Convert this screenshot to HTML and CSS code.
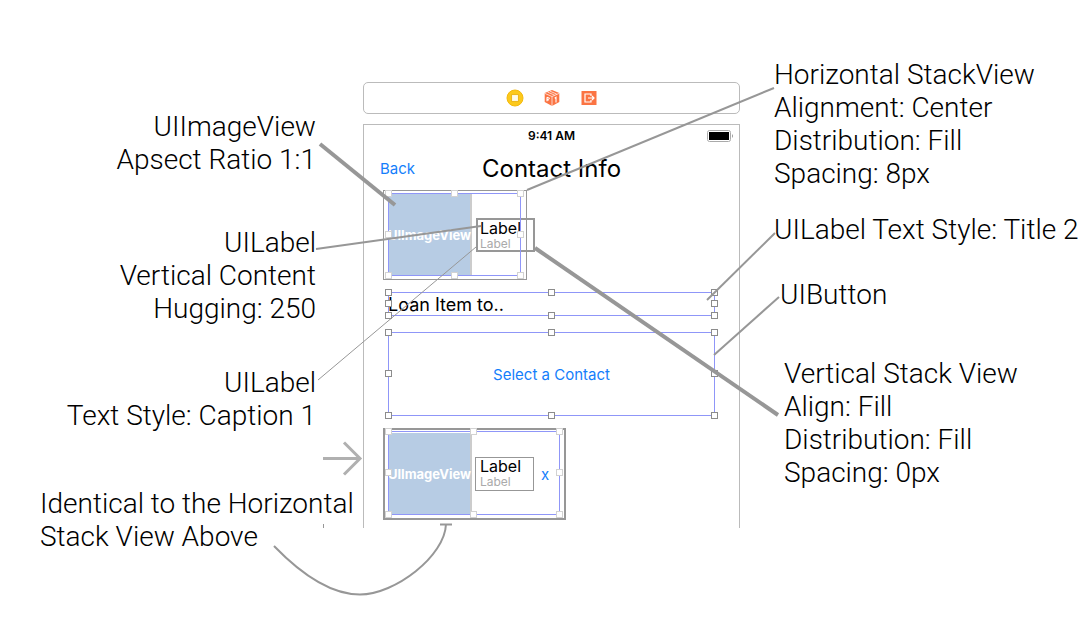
FILE: index.html
```html
<!DOCTYPE html>
<html lang="en">
<head>
<meta charset="utf-8">
<title>Contact Info layout</title>
<link rel="stylesheet" href="styles.css">
</head>
<body>
<main class="diagram">
  <section class="notes notes-left">
    <p class="note">UIImageView<br>Apsect Ratio 1:1</p>
    <p class="note note-hugging">UILabel<br>Vertical Content<br>Hugging: 250</p>
    <p class="note note-caption">UILabel<br>Text Style: Caption 1</p>
    <p class="note note-identical">Identical to the Horizontal<br>Stack View Above</p>
  </section>

  <section class="device">
    <div class="dock">
      <svg class="dock-icon" viewBox="0 0 18 18"><circle cx="9" cy="9" r="8" fill="#fcc91c" stroke="#f4b90c"/><rect x="5.7" y="5.7" width="6.6" height="6.6" fill="#fffbe8" stroke="#e5a800" stroke-width=".7"/></svg>
      <svg class="dock-icon" viewBox="0 0 18 18"><path d="M9 1l7.300 3v9L9 17l-7.300-4V4z" fill="#fb7443"/><path d="M1.700 4.300L9 7.500l7.300-3.200M9 7.500V17M4.500 3.100l7 3M6.800 2.100l7 3" fill="none" stroke="#fff" stroke-width=".7"/><path d="M11.700 9.300l1.300-.9v5M4 8.300l2.800 1.200M4 8.300v3.900M4 10.300l2 .8" fill="none" stroke="#fff" stroke-width="1.100"/></svg>
      <svg class="dock-icon" viewBox="0 0 18 18"><rect x="1.500" y="2" width="15" height="14" fill="#fb7443"/><path d="M11 7V5H5v8h6v-2M8 9h6M12 7l2 2-2 2" fill="none" stroke="#fff" stroke-width="1.200"/></svg>
    </div>
    <div class="screen">
      <div class="status">
        <span>9:41 AM</span>
        <svg class="battery" viewBox="0 0 27 12"><rect x=".5" y=".5" width="23" height="11" rx="2" fill="#fff" stroke="#aaa"/><rect x="2" y="2" width="20" height="8" fill="#000"/><path d="M25 4q2 2 0 4z" fill="#999"/></svg>
      </div>
      <header class="navbar">
        <button class="back" type="button">Back</button>
        <h1 class="title">Contact Info</h1>
      </header>

      <div class="stack stack-first">
        <div class="image">UIImageView</div>
        <div class="labels labels-bold"><span class="label">Label</span><span class="caption">Label</span></div>
        <div class="selection soft"><i class="h tl"></i><i class="h tc"></i><i class="h tr"></i><i class="h ml"></i><i class="h mr"></i><i class="h bl"></i><i class="h bc"></i><i class="h br"></i></div>
      </div>

      <div class="loan">Loan Item to..
        <div class="selection"><i class="h tl"></i><i class="h tc"></i><i class="h tr"></i><i class="h ml"></i><i class="h mr"></i><i class="h bl"></i><i class="h bc"></i><i class="h br"></i></div>
      </div>

      <div class="picker">
        <button class="select" type="button">Select a Contact</button>
        <div class="selection"><i class="h tl"></i><i class="h tc"></i><i class="h tr"></i><i class="h ml"></i><i class="h mr"></i><i class="h bl"></i><i class="h bc"></i><i class="h br"></i></div>
      </div>

      <div class="stack stack-second">
        <div class="image">UIImageView</div>
        <div class="labels"><span class="label">Label</span><span class="caption">Label</span></div>
        <button class="remove" type="button">x</button>
        <div class="selection soft"><i class="h tl"></i><i class="h tc"></i><i class="h tr"></i><i class="h ml"></i><i class="h mr"></i><i class="h bl"></i><i class="h bc"></i><i class="h br"></i></div>
      </div>
    </div>
  </section>

  <section class="notes notes-right">
    <p class="note">Horizontal StackView<br>Alignment: Center<br>Distribution: Fill<br>Spacing: 8px</p>
    <p class="note note-title2">UILabel Text Style: Title 2</p>
    <p class="note note-button">UIButton</p>
    <p class="note note-vertical">Vertical Stack View<br>Align: Fill<br>Distribution: Fill<br>Spacing: 0px</p>
  </section>

  <svg class="connectors" viewBox="0 0 1087 638" preserveAspectRatio="none" fill="none" stroke="#979797" aria-hidden="true">
    <path d="M774 88L527 190" stroke-width="2"/>
    <path d="M320 144L395 205" stroke-width="4"/>
    <path d="M316 249L481 226" stroke-width="2"/>
    <path d="M318 380L476 247" stroke-width="1"/>
    <path d="M775 233L707 300" stroke-width="2"/>
    <path d="M779 297L714 355" stroke-width="2"/>
    <path d="M535 248L778 415" stroke-width="4"/>
    <path d="M323 458.500H360M344 442.500L360 458.500L344 474.500" stroke="#b0b0b0" stroke-width="3"/>
    <path d="M274 546C303 576 333 594.500 360 594.500C395 594.500 445 556 446 524M440 524.500H452" stroke-width="2"/>
    <path d="M323.500 524V528" stroke-width="1"/>
  </svg>
</main>
</body>
</html>
```
FILE: styles.css
```css
* { box-sizing: border-box; }

body {
  margin: 0;
  background: #fff;
  color: #000;
  font-family: Inter, "Liberation Sans", sans-serif;
}

button {
  padding: 0;
  border: 0;
  background: none;
  color: #147efb;
  font: inherit;
}

.diagram {
  position: relative;
  display: grid;
  grid-template-columns: 363fr 377fr 347fr;
  min-height: 100vh;
}

.notes {
  display: flex;
  flex-direction: column;
  min-width: 0;
  font: 300 28px/33px Roboto, "Liberation Sans", sans-serif;
  white-space: nowrap;
}
.note { margin: 0; }

.notes-left { padding: 110px 47px 0 40px; text-align: right; }
.note-hugging { margin-top: 50px; }
.note-caption { margin-top: 41px; }
.note-identical { margin-top: 55px; text-align: left; }

.notes-right { padding: 58px 0 0 34px; }
.note-title2 { margin-top: 23px; }
.note-button { margin-top: 32px; padding-left: 6px; }
.note-vertical { margin-top: 46px; padding-left: 10px; }

.device { padding-top: 82px; }

.dock {
  display: flex;
  align-items: center;
  justify-content: center;
  gap: 19px;
  height: 32px;
  border: 1px solid #bbb;
  border-radius: 5px;
}
.dock-icon { width: 18px; height: 18px; }

.screen {
  display: flex;
  flex-direction: column;
  height: 404px;
  margin-top: 10px;
  border: 1px solid #bbb;
  border-bottom: 0;
}

.status {
  display: grid;
  grid-template-columns: 1fr auto 1fr;
  align-items: center;
  height: 21px;
  padding: 0 5px;
  font-size: 12px;
  font-weight: 600;
}
.status span { grid-column: 2; }
.battery { width: 27px; height: 12px; justify-self: end; }

.navbar {
  display: grid;
  grid-template-columns: 1fr auto 1fr;
  align-items: center;
  height: 44px;
  padding: 0 16px;
}
.back { justify-self: start; font-size: 15px; }
.title { margin: 0; font-size: 24px; font-weight: 400; }

.selection {
  position: absolute;
  inset: 0;
  border: 1px solid #8f96f8;
  pointer-events: none;
}
.h {
  position: absolute;
  width: 7px;
  height: 7px;
  border: 1px solid #8c8c8c;
  background: #fff;
}
.soft .h { border-color: #d2d2d2; }
.tl, .tc, .tr { top: -4px; }
.ml, .mr { top: calc(50% - 4px); }
.bl, .bc, .br { bottom: -4px; }
.tl, .ml, .bl { left: -4px; }
.tc, .bc { left: calc(50% - 4px); }
.tr, .mr, .br { right: -4px; }

.stack {
  position: relative;
  display: flex;
  align-items: center;
  flex: none;
  margin-left: 19px;
}
.stack .selection { inset: 2px 5px 3px 4px; }
.stack-first {
  width: 144px;
  height: 90px;
  padding-left: 5px;
  border: 1px solid #979797;
}
.stack-second {
  width: 183px;
  height: 92px;
  margin-top: 12px;
  padding-left: 4px;
  border: 2px solid #979797;
}
.stack-second .selection { inset: 1px 4px 3px 3px; }

.image {
  display: flex;
  align-items: center;
  justify-content: center;
  flex: none;
  width: 83px;
  height: 82px;
  border-right: 2px solid #ccc;
  background: #b7cce4;
  color: #fff;
  font-size: 13px;
  font-weight: 700;
}

.labels {
  display: flex;
  flex-direction: column;
  flex: none;
  width: 59px;
  height: 34px;
  margin-left: 3px;
  padding-left: 4px;
  border: 1px solid #979797;
}
.labels-bold {
  margin-left: 4px;
  padding-left: 2px;
  border-width: 2px;
}
.label { font-size: 16px; line-height: 16px; }
.caption { color: #aaa; font-size: 12px; line-height: 16px; }
.remove { margin-left: 7px; font-size: 15px; }

.loan, .picker {
  position: relative;
  flex: none;
  margin: 0 24px;
}
.loan {
  height: 24px;
  margin-top: 12px;
  font-size: 18px;
  line-height: 26px;
}
.picker {
  display: grid;
  place-items: center;
  height: 84px;
  margin-top: 16px;
}
.select { font-size: 15px; }

.connectors {
  position: absolute;
  inset: 0;
  width: 100%;
  height: 638px;
  pointer-events: none;
}
```
